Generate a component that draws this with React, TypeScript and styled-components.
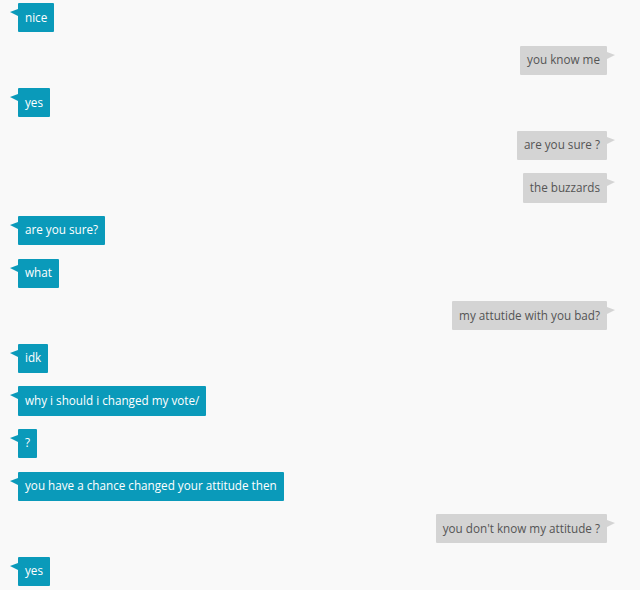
import React from 'react'
import styled, { createGlobalStyle } from 'styled-components'

type Message = {
    text: string
    mine: boolean
}

const messages: Array<Message> = [
    { text: 'nice', mine: false },
    { text: 'you know me', mine: true },
    { text: 'yes', mine: false },
    { text: 'are you sure ?', mine: true },
    { text: 'the buzzards', mine: true },
    { text: 'are you sure?', mine: false },
    { text: 'what', mine: false },
    { text: 'my attutide with you bad?', mine: true },
    { text: 'idk', mine: false },
    { text: 'why i should i changed my vote/', mine: false },
    { text: '?', mine: false },
    { text: 'you have a chance changed your attitude then', mine: false },
    { text: "you don't know my attitude ?", mine: true },
    { text: 'yes', mine: false },
]

const GlobalStyle = createGlobalStyle`
    html, body {
        margin: 0;
        padding: 0;
        background: #f9f9f9;
    }
`

const Thread = styled.div`
    display: flex;
    flex-direction: column;
    gap: 13.3px;
    padding: 3px 33px 0 18px;
    font-family: 'Open Sans', 'DejaVu Sans', sans-serif;
`

const Row = styled.div<{ $mine: boolean }>`
    display: flex;
    justify-content: ${(p) => (p.$mine ? 'flex-end' : 'flex-start')};
`

const Bubble = styled.div<{ $mine: boolean }>`
    position: relative;
    padding: 5.5px 7px 6.5px;
    line-height: 17.3px;
    font-size: 11.7px;
    border-radius: 1px;
    background: ${(p) => (p.$mine ? '#d4d4d4' : '#0a9aba')};
    color: ${(p) => (p.$mine ? '#555555' : '#ffffff')};

    &::before {
        content: '';
        position: absolute;
        top: 6px;
        ${(p) => (p.$mine ? 'right: -8px;' : 'left: -8px;')}
        width: 0;
        height: 0;
        border-top: 3px solid transparent;
        border-bottom: 4px solid transparent;
        ${(p) =>
            p.$mine ? 'border-left: 8px solid #d4d4d4;' : 'border-right: 8px solid #0a9aba;'}
    }
`

export default function App(): React.ReactElement {
    return (
        <>
            <GlobalStyle />
            <Thread>
                {messages.map((m, i) => (
                    <Row key={i} $mine={m.mine}>
                        <Bubble $mine={m.mine}>{m.text}</Bubble>
                    </Row>
                ))}
            </Thread>
        </>
    )
}
